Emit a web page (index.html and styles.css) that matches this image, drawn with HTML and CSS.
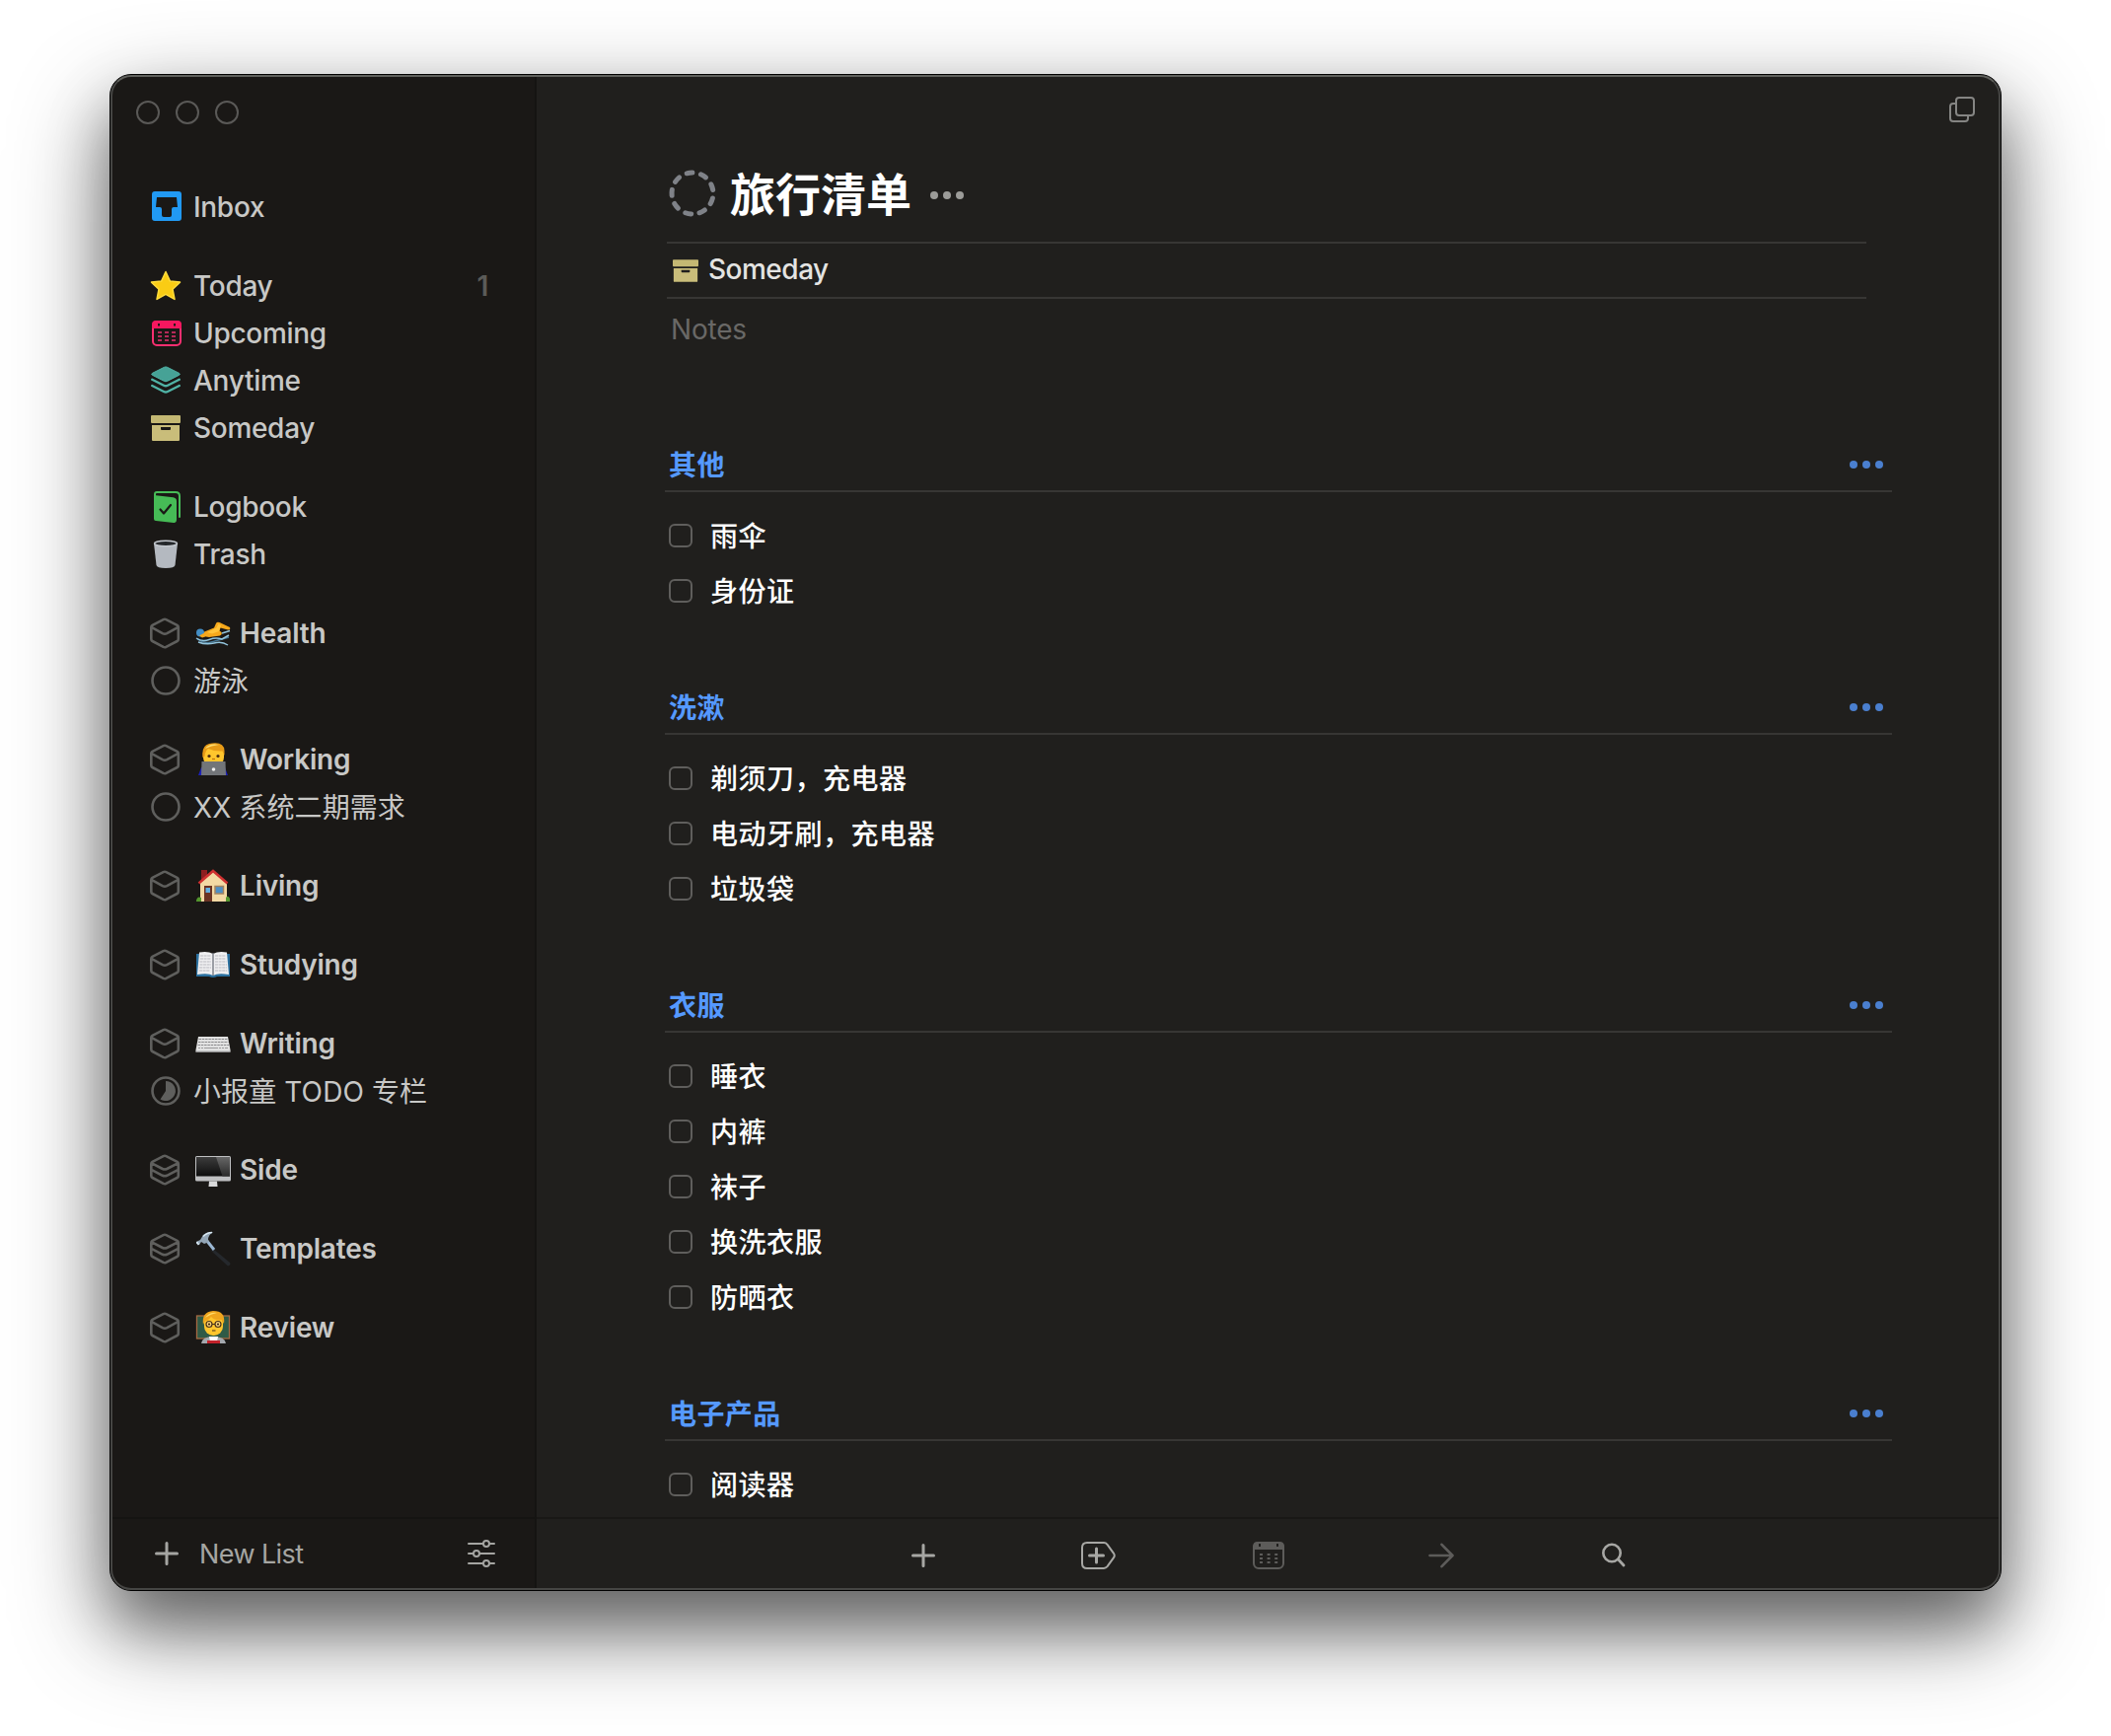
FILE: index.html
```html
<!DOCTYPE html>
<html lang="zh-CN">
<head>
<meta charset="utf-8">
<title>旅行清单</title>
<link rel="stylesheet" href="styles.css">
</head>
<body>
<svg class="defs" width="0" height="0" aria-hidden="true">
  <linearGradient id="screen" x1="0" y1="0" x2="0" y2="1"><stop offset="0" stop-color="#3c3c3c"/><stop offset="1" stop-color="#0d0d0d"/></linearGradient>
  <linearGradient id="glare" x1="0" y1="0" x2="0" y2="1"><stop offset="0" stop-color="#666"/><stop offset="1" stop-color="#2b2b2b"/></linearGradient>
  <symbol id="area" viewBox="0 0 32 32">
    <path d="M13.6 2.1 Q15 1.4 16.4 2.1 L27.6 7.9 Q28.800 8.6 28.800 10 V22 Q28.800 23.4 27.6 24 L16.4 29.9 Q15 30.6 13.6 29.9 L2.500 24 Q1.300 23.4 1.300 22 V10 Q1.300 8.6 2.500 7.9 Z M1.900 10.2 L12.8 16.2 Q15 17.3 17.2 16.2 L28.2 10.2"/>
  </symbol>
  <symbol id="stack" viewBox="0 0 32 32">
    <path d="M13.6 2.1 Q15 1.4 16.4 2.1 L27.6 7.9 Q28.800 8.6 28.800 10 V22 Q28.800 23.4 27.6 24 L16.4 29.9 Q15 30.6 13.6 29.9 L2.500 24 Q1.300 23.4 1.300 22 V10 Q1.300 8.6 2.500 7.9 Z M1.900 9.4 L12.8 15 Q15 16 17.2 15 L28.2 9.4 M1.900 16.2 L12.8 21.8 Q15 22.8 17.2 21.8 L28.2 16.2"/>
  </symbol>
  <symbol id="ring" viewBox="0 0 32 32"><circle cx="16" cy="16" r="13.5"/></symbol>
  <symbol id="box" viewBox="0 0 30 26">
    <path fill="#c4b873" d="M1 0H29Q30 0 30 1V7Q30 8 29 8H1Q0 8 0 7V1Q0 0 1 0Z"/>
    <path fill="#c9bd7a" fill-rule="evenodd" d="M1 10H29V25Q29 26 28 26H2Q1 26 1 25ZM10 12V14Q10 15 11 15H19Q20 15 20 14V12Z"/>
  </symbol>
  <symbol id="dots" viewBox="0 0 36 10"><circle cx="5" cy="5" r="4"/><circle cx="18" cy="5" r="4"/><circle cx="31" cy="5" r="4"/></symbol>
</svg>

<div class="window">
  <aside class="sidebar">
    <div class="lights"><i></i><i></i><i></i></div>
    <nav class="lists">
      <div class="group">
        <div class="row"><svg class="icon" viewBox="0 0 32 32"><path fill="#2199f3" fill-rule="evenodd" d="M5 0H29Q32 0 32 3V27Q32 30 29 30H5Q2 30 2 27V3Q2 0 5 0ZM7 6L6 16H10Q12 16 12 18V24Q12 26 14 26H20Q22 26 22 24V18Q22 16 24 16H28L27 6Z"/></svg><span>Inbox</span></div>
      </div>
      <div class="group">
        <div class="row"><svg class="icon" viewBox="0 0 32 32"><path fill="#facc14" stroke="#ffdc3a" stroke-width="1.5" stroke-linejoin="round" d="M16 1.5L20.3 10.9L30.5 12.1L23 19.2L25 29.4L16 24.4L7 29.4L9 19.2L1.5 12.1L11.7 10.9Z"/></svg><span>Today</span><b class="count">1</b></div>
        <div class="row"><svg class="icon" viewBox="0 0 32 32"><rect x="3" y="4" width="28" height="24" rx="4" fill="none" stroke="#f92f70" stroke-width="2"/><path fill="#f7175f" d="M6 3H28Q32 3 32 7V11H2V7Q2 3 6 3Z"/><path fill="#1a1816" d="M8 6h2v2.5h-2zM24 6h2v2.5h-2z"/><path stroke="#b52a58" stroke-width="2" stroke-dasharray="4 3" d="M8 15H27M8 19H27M8 23H27"/></svg><span>Upcoming</span></div>
        <div class="row"><svg class="icon" viewBox="0 0 32 32"><path fill="#46a296" stroke="#50b3a6" stroke-width="1" d="M14.5 2.3Q16 1.6 17.5 2.3L29.7 8.4Q31 9.3 29.7 10.2L17.5 16.4Q16 17.1 14.5 16.4L2.3 10.2Q1 9.3 2.3 8.4Z"/><path fill="none" stroke="#50b3a6" stroke-width="2.4" stroke-linecap="round" d="M2.2 14.8L14 20.8Q16 21.8 18 20.8L29.8 14.8M2.2 21L14 27Q16 28 18 27L29.8 21"/></svg><span>Anytime</span></div>
        <div class="row"><svg class="icon icon-box"><use href="#box"/></svg><span>Someday</span></div>
      </div>
      <div class="group">
        <div class="row"><svg class="icon" viewBox="0 0 32 32"><path fill="none" stroke="#48bc58" stroke-width="2" stroke-linecap="round" d="M5 6V3Q5 1 7 1H26Q30 1 30 5V26"/><path fill="#46bb56" d="M4 4L23.5 6.2Q27 6.8 27 10V29Q27 32.3 24 32L6 30Q4 29.800 4 28Z"/><path fill="none" stroke="#1a1816" stroke-width="2.2" stroke-linecap="round" stroke-linejoin="round" d="M10.500 18.500L14 22.500L21 14"/></svg><span>Logbook</span></div>
        <div class="row"><svg class="icon" viewBox="0 0 32 32"><path fill="#b4b9c0" d="M4 5L6.500 27Q7 30 16 30Q25 30 25.500 27L28 5Z"/><ellipse cx="16" cy="5" rx="11.500" ry="2.800" fill="#24272a" stroke="#c3c8ce" stroke-width="1.500"/></svg><span>Trash</span></div>
      </div>
      <div class="group">
        <div class="row area"><svg class="icon line"><use href="#area"/></svg>
          <svg class="emoji" viewBox="0 0 36 36"><path fill="none" stroke="#497b99" stroke-width="1.500" d="M2 24Q9 29 16 27T34 22"/><path fill="#f6a81b" d="M8 17L19 12.500L21 8Q22 6 24.500 7L35 12Q36 15 33 14.500L25.500 12.500L24.500 15.500Q29 18 25 20.500L14 22L8 21Z"/><path fill="#ffc43a" d="M12 17L21.500 12.500L23.500 8.500L26 10L24 16L17 18.500Z"/><circle cx="5" cy="17.500" r="4" fill="#438ec5"/><path fill="#f6a81b" d="M4 20.500L9.500 17.500L10 21.500L7 22.500Z"/><path fill="none" stroke="#93c5dd" stroke-width="1.500" d="M1 23Q7 27 14 24.500T27 24L34 20M3 27Q11 30 19 28T33 30M27 18L35 15.500"/></svg><span>Health</span></div>
        <div class="row project"><svg class="icon line"><use href="#ring"/></svg><span>游泳</span></div>
      </div>
      <div class="group">
        <div class="row area"><svg class="icon line"><use href="#area"/></svg>
          <svg class="emoji" viewBox="0 0 36 36"><path fill="#1c20b9" d="M3 34L6 26H30L33 34Z"/><rect x="8" y="3" width="21" height="21" rx="8" fill="#ffc62d"/><path fill="#e79b17" d="M7.500 16Q6 4 14 2Q29-1 29.500 9V14L27.500 9.500Q20 10 13 7Q10 9 9.500 15Z"/><path fill="#ffdd6e" d="M10 7Q14 1 24 3Q16 4 10 7Z"/><circle cx="14" cy="14.500" r="1.600" fill="#4a2b12"/><circle cx="23" cy="14.500" r="1.600" fill="#4a2b12"/><path stroke="#bd7410" stroke-width="1.200" d="M17 17.500H20"/><path fill="#727579" d="M6.500 20H30.500L31 34H6Z"/><circle cx="18.500" cy="28" r="1.800" fill="#eee"/></svg><span>Working</span></div>
        <div class="row project"><svg class="icon line"><use href="#ring"/></svg><span>XX 系统二期需求</span></div>
      </div>
      <div class="group">
        <div class="row area"><svg class="icon line"><use href="#area"/></svg>
          <svg class="emoji" viewBox="0 0 36 36"><path fill="#8e1e20" d="M6 2H12V11L6 15Z"/><path fill="#f3d9a4" d="M5 15L18 4L32 15V34H5Z"/><path fill="none" stroke="#cf3030" stroke-width="2.500" d="M3.500 15.500L18 3L32.500 15.500"/><path fill="#6a3323" d="M9 18H17V34H9Z"/><path fill="#63afe0" d="M10.500 20H15V25H10.500Z"/><path fill="#4d8fc4" stroke="#a3835f" stroke-width="1.500" d="M20 18.500H28.500V26H20Z"/><path fill="#54972e" d="M1 33Q2 28 6 30V34H1ZM31 34V30Q33 27 35 31V34Z"/></svg><span>Living</span></div>
      </div>
      <div class="group">
        <div class="row area"><svg class="icon line"><use href="#area"/></svg>
          <svg class="emoji" viewBox="0 0 36 36"><path fill="#2a6f9e" d="M1 7H35V30H22Q18 32 14 30H1Z"/><path fill="#efeff1" d="M4 5.500Q13 4 18 7Q23 4 32 5.500L34 28Q23 26 18 29Q13 26 2 28Z"/><path stroke="#b8b8bf" stroke-width="1" stroke-dasharray="3 .6" d="M5 9H16M5 12H16M4.500 15H16M4.500 18H16M4 21H16M4 24H15M20 9H31M20 12H31M20 15H31.500M20 18H32M20 21H32M20 24H32"/><path stroke="#777b85" stroke-width="1.400" d="M18 6V29"/></svg><span>Studying</span></div>
      </div>
      <div class="group">
        <div class="row area"><svg class="icon line"><use href="#area"/></svg>
          <svg class="emoji" viewBox="0 0 36 36"><path fill="#e2e2e2" d="M3 11H33L35.500 24.500V26.500H.5V24.500Z"/><path stroke="#8c8c8e" stroke-width="1" stroke-dasharray="2.500 .8" d="M3.500 13.500H33M3 16.500H33.500M2.500 19.500H34"/><path stroke="#9b9b9d" stroke-width="1" stroke-dasharray="2 1 2 1 14 1" d="M3 22.500H33"/><path stroke="#a6a6a8" stroke-width="1" d="M.5 26H35.500"/></svg><span>Writing</span></div>
        <div class="row project"><svg class="icon line" viewBox="0 0 32 32"><circle cx="16" cy="16" r="13.500"/><path class="pie" d="M16 16V6A10 10 0 1 1 10.500 24.400Z"/></svg><span>小报童 TODO 专栏</span></div>
      </div>
      <div class="group">
        <div class="row area"><svg class="icon line"><use href="#stack"/></svg>
          <svg class="emoji" viewBox="0 0 36 36"><rect x="0" y="4" width="36" height="25.500" rx="1.500" fill="#bfc0c2"/><rect x="1" y="5" width="34" height="19.500" fill="url(#screen)"/><path fill="url(#glare)" d="M21 5H35V24.500H27.500Z"/><path fill="#d9d9da" d="M14 29.500H22L22.500 35H13.500Z"/></svg><span>Side</span></div>
      </div>
      <div class="group">
        <div class="row area"><svg class="icon line"><use href="#stack"/></svg>
          <svg class="emoji" viewBox="0 0 36 36"><path fill="#25282c" d="M18 18L35 32Q36.500 35 33 35.500L16 20Z"/><path stroke="#9bb7d3" stroke-width="3" d="M11 9L19 19"/><path fill="#93a5b5" d="M1 11L5 9L8 4Q12 .5 18 1Q13 4 13 9L14 11L9 13L6 11L4 14L1 13Z"/><path stroke="#d8e8f2" stroke-width="1.600" d="M1.500 11L3.500 14M8 5.500Q12 1.500 17 1.500" fill="none"/></svg><span>Templates</span></div>
      </div>
      <div class="group">
        <div class="row area"><svg class="icon line"><use href="#area"/></svg>
          <svg class="emoji" viewBox="0 0 36 36"><rect x="1.500" y="6" width="33" height="23" fill="#2f5a46" stroke="#a56a43" stroke-width="1.300"/><path fill="#a4a8ae" d="M6 34Q7 27 18 27Q30 27 31 34Z"/><path fill="#fff" d="M14 27H23L22 32H15Z"/><rect x="9" y="4" width="19" height="22" rx="9" fill="#ffc62d"/><path fill="#efa51d" d="M8 15Q6 2 18 1Q31 1 29 14L26.500 10Q20 11 16 7Q13 11 9.500 11.500Z"/><path fill="#ffdb68" d="M10 8Q14 2 22 3Q16 4 10 8Z"/><g fill="#f6d37a" stroke="#4a3219" stroke-width="1.200"><circle cx="14" cy="14.500" r="3"/><circle cx="23" cy="14.500" r="3"/><path d="M17 14.500H20M17 21H20.500"/></g><circle cx="14" cy="14.500" r="1.100" fill="#3b2510"/><circle cx="23" cy="14.500" r="1.100" fill="#3b2510"/><path fill="#c3222b" d="M12 31H25V34H12Z"/></svg><span>Review</span></div>
      </div>
    </nav>
    <footer class="sidebar-foot">
      <svg class="plus" viewBox="0 0 24 24"><path d="M12 1.500V22.500M1.500 12H22.500"/></svg>
      <span>New List</span>
      <svg class="sliders" viewBox="0 0 28 28"><path d="M1 4H15.500M22.500 4H27M1 14H5.500M12.500 14H27M1 24H15.500M22.500 24H27"/><circle cx="19" cy="4" r="3"/><circle cx="9" cy="14" r="3"/><circle cx="19" cy="24" r="3"/></svg>
    </footer>
  </aside>

  <main class="main">
    <svg class="new-window" viewBox="0 0 26 26"><rect x="7" y="1" width="18" height="18" rx="3"/><path d="M7 7H4Q1 7 1 10V22Q1 25 4 25H16Q19 25 19 22V19"/></svg>
    <div class="content">
      <header class="title">
        <svg class="dashed" viewBox="0 0 48 48"><circle cx="24" cy="24" r="21" pathLength="132" stroke-dasharray="6 8.667" stroke-dashoffset="3" transform="rotate(-98 24 24)"/></svg>
        <h1>旅行清单</h1>
        <svg class="dots dots-title"><use href="#dots"/></svg>
      </header>
      <div class="meta"><svg class="meta-box"><use href="#box"/></svg><span>Someday</span></div>
      <div class="notes">Notes</div>

      <section>
        <h2>其他<svg class="dots"><use href="#dots"/></svg></h2>
        <ul><li>雨伞</li><li>身份证</li></ul>
      </section>
      <section>
        <h2>洗漱<svg class="dots"><use href="#dots"/></svg></h2>
        <ul><li>剃须刀，充电器</li><li>电动牙刷，充电器</li><li>垃圾袋</li></ul>
      </section>
      <section>
        <h2>衣服<svg class="dots"><use href="#dots"/></svg></h2>
        <ul><li>睡衣</li><li>内裤</li><li>袜子</li><li>换洗衣服</li><li>防晒衣</li></ul>
      </section>
      <section>
        <h2>电子产品<svg class="dots"><use href="#dots"/></svg></h2>
        <ul><li>阅读器</li></ul>
      </section>
    </div>
    <footer class="toolbar">
      <svg width="24" height="24" viewBox="0 0 24 24"><path stroke-width="3" d="M12 1.500V22.500M1.500 12H22.500"/></svg>
      <svg class="tag" width="35" height="28" viewBox="0 0 35 28"><path stroke-width="2" d="M6 1H23Q25 1 26.500 2.800L33 11.800Q34.500 14 33 16.200L26.500 25.200Q25 27 23 27H6Q1 27 1 22V6Q1 1 6 1Z"/><path stroke-width="3" d="M15.500 7V21M8.500 14H22.500"/></svg>
      <svg class="dim" width="32" height="30" viewBox="0 0 32 30"><rect x="1" y="2" width="30" height="26" rx="5" stroke-width="2"/><path class="solid" d="M5 1H27Q32 1 32 6V9H0V6Q0 1 5 1Z"/><path class="hole" d="M6 3h2v3h-2zM24 3h2v3h-2z"/><path class="cells" d="M7 14H25.500M7 18H25.500M7 22H25.500"/></svg>
      <svg class="dim" width="26" height="26" viewBox="0 0 26 26"><path stroke-width="2.600" d="M1.500 13H24M13.500 1.800L24.500 13L13.500 24.200"/></svg>
      <svg width="24" height="26" viewBox="0 0 24 26"><circle cx="10" cy="10.500" r="8.700" stroke-width="2.600"/><path stroke-width="2.800" d="M16.500 17L22 23"/></svg>
    </footer>
  </main>
</div>
</body>
</html>
```
FILE: styles.css
```css
* { box-sizing: border-box; }

body {
  margin: 0;
  padding: 75px 0 0 111px;
  height: 1760px;
  overflow: hidden;
  background: #fff;
  font-family: Inter, "Noto Sans CJK SC", sans-serif;
  font-size: 28px;
  font-weight: 500;
  color: #c8c8c6;
}

.defs { position: absolute; }

.window {
  position: relative;
  display: flex;
  width: 1918px;
  height: 1538px;
  border: 1px solid #000;
  border-radius: 22px;
  background: #201f1d;
  box-shadow: 0 36px 60px rgba(0, 0, 0, .36), 0 36px 100px rgba(0, 0, 0, .44);
}

/* light hairline inside the window edge */
.window::after {
  content: "";
  position: absolute;
  inset: 0;
  border: 2px solid #454543;
  border-top-color: #5f605c;
  border-radius: 21px;
  pointer-events: none;
}

.sidebar {
  display: flex;
  flex-direction: column;
  width: 432px;
  border-right: 2px solid #151412;
  border-radius: 21px 0 0 21px;
  background: #1a1816;
}

.lights {
  display: flex;
  gap: 16px;
  height: 110px;
  padding: 26px 0 0 26px;
}
.lights i {
  width: 24px;
  height: 24px;
  border: 2px solid #5a5957;
  border-radius: 50%;
}

.lists {
  flex: 1;
  display: flex;
  flex-direction: column;
  gap: 32px;
}
.row {
  display: flex;
  align-items: center;
  height: 48px;
  padding: 0 47px 0 40px;
  letter-spacing: -.3px;
  white-space: nowrap;
}
.icon {
  flex: none;
  width: 32px;
  height: 32px;
  margin-right: 12px;
}
.icon-box { width: 30px; height: 26px; margin: 0 13px 0 1px; }
.count { margin-left: auto; font-weight: 600; color: #5b5b58; }
.area { font-weight: 600; letter-spacing: -.2px; }
.project { font-weight: 400; letter-spacing: .1px; }
.project span { padding-bottom: 3px; }
.emoji { width: 36px; height: 36px; margin: 0 9px 0 2px; }
.line { fill: none; stroke: #5f5f5d; stroke-width: 2.600; stroke-linejoin: round; }
.pie { fill: #5f5f5d; stroke: none; }

.sidebar-foot {
  display: flex;
  align-items: center;
  height: 74px;
  padding: 0 40px 2px 45px;
  border-top: 2px solid #151412;
  font-size: 27px;
  font-weight: 400;
  letter-spacing: -.6px;
  color: #a5a5a2;
}
.sidebar-foot svg { fill: none; stroke: #a5a5a2; stroke-linecap: round; }
.plus { width: 24px; height: 24px; margin-right: 21px; stroke-width: 3; }
.sliders { width: 28px; height: 28px; margin-left: auto; stroke-width: 2; }

.main {
  position: relative;
  flex: 1;
  display: flex;
  flex-direction: column;
  min-width: 0;
}
.new-window {
  position: absolute;
  top: 22px;
  right: 26px;
  width: 26px;
  height: 26px;
  fill: none;
  stroke: #858583;
  stroke-width: 2;
}

.content {
  flex: 1;
  min-height: 0;
  padding: 87px 110px 0 130px;
  overflow: hidden;
}

.title {
  display: flex;
  align-items: center;
  height: 68px;
  margin-bottom: 14px;
  padding-left: 4px;
}
.dashed { width: 48px; height: 48px; margin: 0 14px 2px 0; fill: none; stroke: #7f8288; stroke-width: 5; stroke-linecap: round; }
h1 { margin: 0; font-size: 46px; font-weight: 700; line-height: 68px; color: #fff; }
.dots { width: 36px; height: 10px; fill: #4a7fcf; }
.dots-title { margin: 2px 0 0 18px; fill: #9c9c99; }

.meta {
  display: flex;
  align-items: center;
  height: 58px;
  margin: 0 26px 0 2px;
  padding-left: 6px;
  border: solid #373634;
  border-width: 2px 0;
  letter-spacing: -.5px;
  color: #e4e4e2;
}
.meta span { padding-bottom: 2px; }
.meta-box { width: 26px; height: 23px; margin-right: 10px; }
.notes {
  height: 62px;
  margin-bottom: 80px;
  padding-left: 6px;
  line-height: 62px;
  font-weight: 400;
  letter-spacing: -.2px;
  color: #696866;
}

section { margin-bottom: 64px; }
h2 {
  display: flex;
  align-items: center;
  justify-content: space-between;
  height: 54px;
  margin: 0;
  padding: 0 8px 3px 4px;
  border-bottom: 2px solid #373634;
  font-size: 28px;
  font-weight: 700;
  letter-spacing: .4px;
  color: #5599ff;
}
h2 .dots { margin-top: 3px; }
ul { margin: 0; padding: 16px 0 0 4px; list-style: none; }
li {
  display: flex;
  align-items: center;
  gap: 18px;
  height: 56px;
  padding-bottom: 3px;
  letter-spacing: .5px;
  color: #fff;
}
li::before {
  content: "";
  box-sizing: border-box;
  width: 24px;
  height: 24px;
  margin-top: 3px;
  border: 2px solid #5f5e5c;
  border-radius: 6px;
}

.toolbar {
  display: grid;
  grid-template-columns: repeat(5, 175px);
  place-content: center;
  place-items: center;
  height: 74px;
  padding: 2px 0 0;
  border-top: 2px solid #191816;
}
.toolbar svg { fill: none; stroke: #a7a7a4; stroke-linecap: round; stroke-linejoin: round; }
.toolbar .tag { margin-left: 4px; }
.toolbar .dim { stroke: #5d5c5a; }
.toolbar .solid { fill: #5d5c5a; stroke: none; }
.toolbar .hole { fill: #201f1d; stroke: none; }
.toolbar .cells { stroke-width: 2; stroke-linecap: butt; stroke-dasharray: 3 4.600; }
```
